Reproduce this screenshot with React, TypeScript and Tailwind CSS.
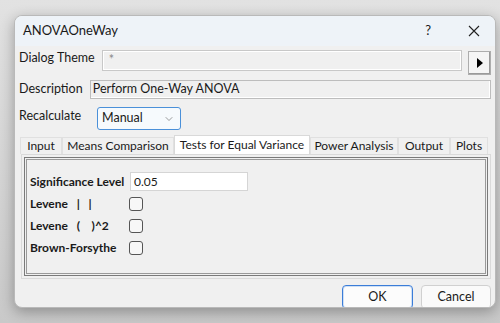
import { ChevronDown } from "lucide-react";

const font = { fontFamily: 'Lato, "Noto Sans", sans-serif' };

function Check() {
  return <div className="h-[14px] w-[14px] shrink-0 rounded-[3px] border border-[#555] bg-[#f7f7f7]" />;
}

const tabs: [string, string][] = [
  ["Input", "w-[42px]"],
  ["Means Comparison", "w-[112px]"],
  ["Tests for Equal Variance", "w-[136px]"],
  ["Power Analysis", "w-[88px]"],
  ["Output", "w-[52px]"],
  ["Plots", "w-[38px]"],
];

export default function App() {
  return (
    <div
      className="h-[323px] w-[500px] overflow-hidden whitespace-nowrap bg-gradient-to-b from-[#e2e2e2] to-[#c9c9c9] pl-[14px] pt-[15px] text-[#1a1a1a]"
      style={font}
    >
      <div className="relative flex h-[293px] w-[482px] flex-col overflow-hidden rounded-[8px] border border-[#b9b9b9] bg-[#f0f0f0] shadow-[0_4px_14px_rgba(0,0,0,0.3)]">
        {/* title bar */}
        <div className="flex h-[30px] shrink-0 items-center bg-[#eef3f8] pl-[8px] text-[13px]">
          <span>ANOVAOneWay</span>
          <span className="ml-auto mr-[37px] text-[13px]">?</span>
          <svg width="12" height="12" viewBox="0 0 12 12" className="mr-[15px]">
            <path d="M1 1 L11 11 M11 1 L1 11" stroke="#222" strokeWidth="1.1" />
          </svg>
        </div>

        <div className="flex flex-1 flex-col pl-[4px] pr-[4px] pt-[4px] text-[12.5px]">
          {/* dialog theme */}
          <div className="flex h-[25px] shrink-0 items-start">
            <span className="-mt-[1px] w-[83px]">Dialog Theme</span>
            <div className="flex h-[21px] w-[362px] items-center border border-[#c8c8c8] bg-[#f0f0f0] pl-[6px] text-[#888] shadow-[inset_0_0_0_1px_#fff]">
              *
            </div>
            <div className="ml-[6px] mt-[1px] flex h-[24px] w-[23px] items-center justify-center border border-[#adadad] bg-[#f5f5f5] shadow-[inset_-1px_-1px_0_#9a9a9a]">
              <svg width="8" height="10" viewBox="0 0 8 10">
                <path d="M1 0 L7 5 L1 10 Z" fill="#000" />
              </svg>
            </div>
          </div>

          {/* description */}
          <div className="mt-[5px] flex h-[18px] shrink-0 items-center">
            <span className="w-[71px]">Description</span>
            <div className="flex h-[19px] w-[403px] items-center border border-[#bdbdbd] bg-[#f0f0f0] pl-[2px] shadow-[inset_-1px_-1px_0_#fff]">
              Perform One-Way ANOVA
            </div>
          </div>

          {/* recalculate */}
          <div className="mt-[9px] flex h-[23px] shrink-0 items-center">
            <span className="mb-[4px] w-[78px]">Recalculate</span>
            <div className="flex h-[23px] w-[84px] items-center rounded-[3px] border border-[#4a90d9] bg-[#f6fafd] pl-[4px] pr-[5px]">
              <span>Manual</span>
              <ChevronDown size={12} strokeWidth={1.3} className="ml-auto text-[#666]" />
            </div>
          </div>

          {/* tabs */}
          <div className="ml-[1px] mt-[6px] flex h-[18px] shrink-0 items-end text-[12px]">
            {tabs.map(([t, w], i) => (
              <div
                key={t}
                className={
                  (i === 2
                    ? "h-[19px] border-[#d9d9d9] bg-white "
                    : "h-[17px] border-[#e0e0e0] bg-[#f0f0f0] ") +
                  w +
                  " flex shrink-0 items-center justify-center border border-b-0"
                }
              >
                {t}
              </div>
            ))}
          </div>

          <div className="ml-[2px] h-[125px] w-[470px] shrink-0 border border-[#dadada] bg-[#f0f0f0] p-[2px]">
            <div className="h-full w-full border border-[#7a7a7a] p-[1px]">
              <div className="h-full w-full border border-[#9a9a9a] pl-[3px] pt-[12px] text-[12px] font-bold">
                <div className="flex h-[19px] items-center">
                  <span className="w-[100px]">Significance Level</span>
                  <div className="flex h-[19px] w-[118px] items-center border border-[#d5d5d5] bg-white pl-[3px] font-normal">
                    0.05
                  </div>
                </div>
                <div className="mt-[4px] flex h-[18px] items-center">
                  <span className="w-[99px]">Levene&nbsp;&nbsp;&nbsp;|&nbsp;&nbsp;&nbsp;|</span>
                  <Check />
                </div>
                <div className="mt-[4px] flex h-[18px] items-center">
                  <span className="w-[99px]">Levene&nbsp;&nbsp;&nbsp;(&nbsp;&nbsp;&nbsp;&nbsp;)^2</span>
                  <Check />
                </div>
                <div className="mt-[4px] flex h-[18px] items-center">
                  <span className="w-[99px]">Brown-Forsythe</span>
                  <Check />
                </div>
              </div>
            </div>
          </div>

          {/* buttons */}
          <div className="mt-[6px] flex shrink-0 justify-end gap-[8px] pr-0">
            <div className="flex h-[24px] w-[71px] items-center justify-center rounded-[4px] border border-[#3b7dd8] bg-[#fcfcfc] shadow-[inset_0_0_0_1px_#cfe0f5]">
              OK
            </div>
            <div className="flex h-[24px] w-[70px] items-center justify-center rounded-[4px] border border-[#d0d0d0] bg-[#fafafa]">
              Cancel
            </div>
          </div>
        </div>
      </div>
    </div>
  );
}
